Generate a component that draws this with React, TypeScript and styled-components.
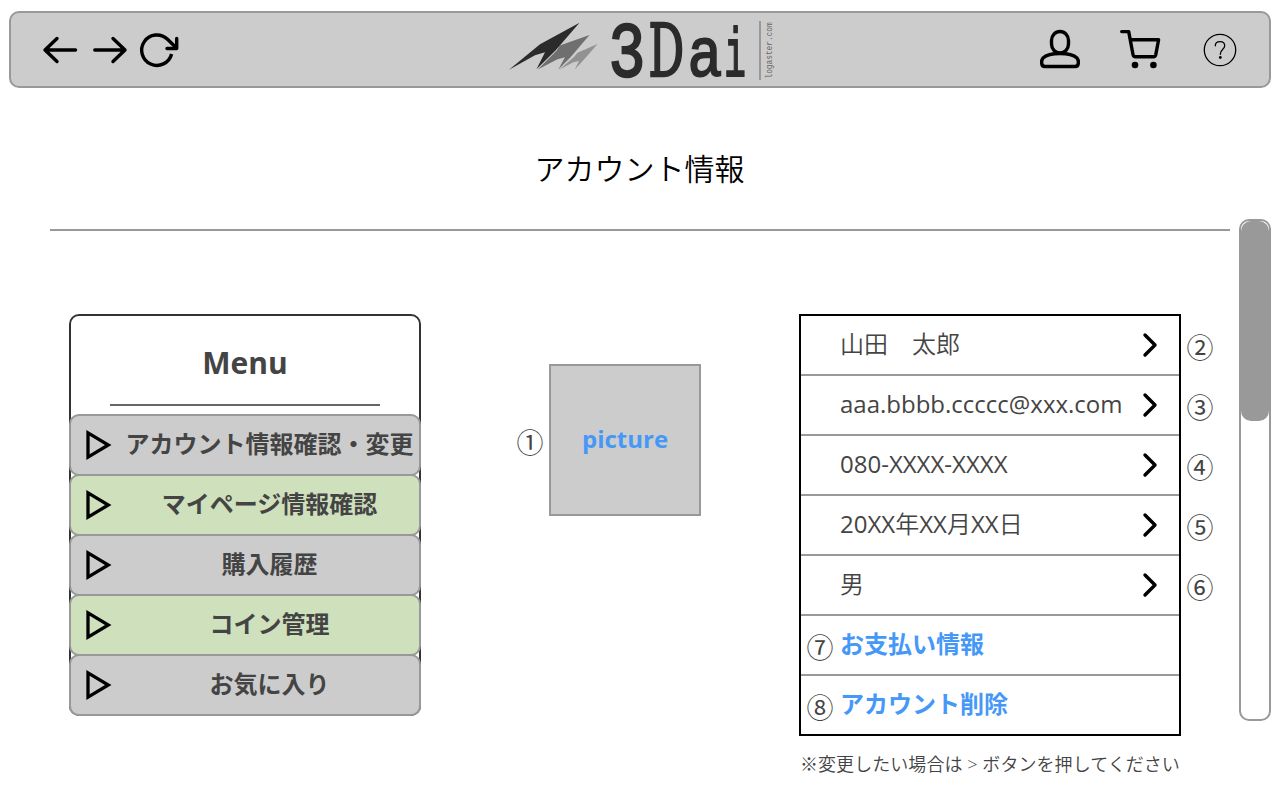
import React from "react";
import styled, { createGlobalStyle } from "styled-components";

const GlobalStyle = createGlobalStyle`
  *, *::before, *::after { box-sizing: border-box; }
  body {
    margin: 0;
    background: #fff;
    color: #444;
    font-family: "Open Sans", "Noto Sans CJK JP", sans-serif;
  }
`;

const lightStack = `"Open Sans", "Noto Sans CJK JP DemiLight", "Noto Sans CJK JP Light", "Noto Sans CJK JP", sans-serif`;

const Page = styled.div`
  width: 1280px;
  height: 800px;
  padding: 11px 9px 0;
  overflow: hidden;
`;

const Toolbar = styled.header`
  display: flex;
  align-items: center;
  height: 77px;
  padding: 0 29px;
  border: 2px solid #999;
  border-radius: 10px;
  background: #ccc;
`;

const IconGroup = styled.div<{ $gap: number }>`
  display: flex;
  flex: none;
  align-items: center;
  gap: ${(p) => p.$gap}px;
`;

const Icon = styled.svg`
  display: block;
  flex: none;
  overflow: visible;
  fill: none;
  stroke: #000;
  stroke-width: 3.4;
  stroke-linecap: round;
  stroke-linejoin: round;
`;

const LogoMark = styled.svg`
  display: block;
  flex: none;
  overflow: visible;
  margin: 0 auto 0 328px;
`;

const Title = styled.h1`
  margin: 0;
  height: 131px;
  padding: 61px 1px 0 0;
  color: #000;
  font-family: ${lightStack};
  font-size: 30px;
  font-weight: 350;
  line-height: 40px;
  text-align: center;
`;

const Body = styled.div`
  display: flex;
  gap: 9px;
  padding-left: 41px;
`;

const Content = styled.main`
  width: 1180px;
  padding-top: 10px;
`;

const Divider = styled.hr`
  height: 2px;
  margin: 0;
  border: 0;
  background: #999;
`;

const Columns = styled.div`
  display: flex;
  align-items: flex-start;
  padding: 83px 0 0 19px;
`;

const MenuPanel = styled.nav`
  display: flex;
  flex-direction: column;
  width: 352px;
  height: 402px;
  border-radius: 10px;
  box-shadow: inset 0 0 0 2px #333;
`;

const MenuTitle = styled.h2`
  height: 90px;
  margin: 0;
  padding-top: 29px;
  font-size: 30px;
  font-weight: 700;
  line-height: 40px;
  text-align: center;
`;

const MenuRule = styled.hr`
  width: 270px;
  height: 2px;
  margin: 0 auto 8px;
  border: 0;
  background: #666;
`;

const MenuItem = styled.a<{ $highlighted: boolean }>`
  display: flex;
  flex: none;
  align-items: center;
  height: 62px;
  margin-bottom: -2px;
  padding-left: 15px;
  border: 2px solid #999;
  border-radius: 10px;
  background: ${(p) => (p.$highlighted ? "#cfe0bc" : "#ccc")};
`;

const MenuLabel = styled.span`
  flex: 1;
  margin-left: 8px;
  font-size: 24px;
  font-weight: 700;
  line-height: 32px;
  text-align: center;
  white-space: nowrap;
  padding-bottom: 3px;
`;

const PictureGroup = styled.section`
  display: flex;
  align-items: center;
  margin: 50px 0 0 95px;
  gap: 5px;
`;

const Marker = styled.span<{ $drop?: number }>`
  display: block;
  flex: none;
  width: 28px;
  padding-top: ${(p) => p.$drop ?? 4}px;
  font-family: "Noto Sans CJK JP", sans-serif;
  font-size: 27px;
  font-weight: 400;
  line-height: 32px;
  text-align: center;
`;

const Picture = styled.div`
  display: flex;
  align-items: center;
  justify-content: center;
  width: 152px;
  height: 152px;
  padding-bottom: 2px;
  border: 2px solid #999;
  background: #ccc;
  color: #4598f7;
  font-size: 24px;
  font-weight: 700;
  line-height: 32px;
`;

const Details = styled.section`
  width: 382px;
  margin-left: 98px;
`;

const Table = styled.div`
  height: 422px;
  border: 2px solid #000;
`;

const Row = styled.div`
  display: flex;
  align-items: center;
  height: 60px;
  padding-right: 21px;
  border-bottom: 2px solid #999;

  &:last-child {
    height: 58px;
    border-bottom: 0;
  }
`;

const Gutter = styled.div`
  display: flex;
  flex: none;
  width: 39px;
  padding-left: 5px;
`;

const Value = styled.span<{ $link?: boolean }>`
  flex: 1;
  padding-bottom: ${(p) => (p.$link ? 3 : 2)}px;
  color: ${(p) => (p.$link ? "#4598f7" : "#444")};
  font-family: ${(p) => (p.$link ? "inherit" : lightStack)};
  font-size: 24px;
  font-weight: ${(p) => (p.$link ? 700 : 400)};
  line-height: 32px;
  white-space: pre;
`;

const Ideographs = styled.span`
  font-weight: 300;
`;

const Note = styled.p`
  margin: 16px 0 0 1px;
  font-family: ${lightStack};
  font-size: 18px;
  font-weight: 350;
  letter-spacing: 0.06px;
  line-height: 24px;
  white-space: nowrap;
`;

const MarkerColumn = styled.div`
  display: flex;
  flex-direction: column;
  gap: 28px;
  margin: 17px 0 0 5px;
`;

const Scrollbar = styled.div`
  flex: none;
  width: 32px;
  height: 502px;
  border: 2px solid #999;
  border-radius: 10px;
`;

const Thumb = styled.div`
  height: 200px;
  border-radius: 10px;
  background: #999;
`;

const Logo = () => (
  <LogoMark width="266" height="60" viewBox="508 20 266 60">
    <path fill="#2b2b2b" d="M509 69.8 540 44.2 579.5 22.8 555.5 50.5 536.5 69.3 545 52.3 535 55.3z" />
    <path fill="#6f6f6f" d="M537.8 69.4 556.8 50.5 559.8 45.5 589.5 35 570.5 57.3 558.3 69.4 565 57.3 557.5 59.3z" />
    <path fill="#929292" d="M559.5 69.4 574 57 577.5 52.8 597.5 44 586 57.3 574.8 69.4 579 61 573.3 62.3z" />
    <g fill="#2b2b2b" stroke="#2b2b2b" fontFamily="Liberation Mono" fontSize="82">
      <text strokeWidth="2.4" transform="translate(608.6 75.6) scale(.75 .95)">3</text>
      <text strokeWidth="2.4" transform="translate(648.6 76.2) scale(.6 .99)" fontFamily="DejaVu Serif" fontSize="74">
        D
      </text>
      <text strokeWidth="2.2" transform="translate(687.4 75.8) scale(.71 .86)">a</text>
      <text strokeWidth="2.2" transform="translate(724.2 76.2) scale(.44 .83)">i</text>
    </g>
    <path stroke="#999" strokeWidth="2" d="M760 21v59" />
    <text
      transform="translate(771.5 78.5) rotate(-90) scale(1 1.2)"
      fill="#666"
      fontFamily="Liberation Mono"
      fontSize="7.8"
    >
      logaster.com
    </text>
  </LogoMark>
);

const menuItems = [
  { label: "アカウント情報確認・変更", highlighted: false },
  { label: "マイページ情報確認", highlighted: true },
  { label: "購入履歴", highlighted: false },
  { label: "コイン管理", highlighted: true },
  { label: "お気に入り", highlighted: false },
];

const accountFields = ["山田　太郎", "aaa.bbbb.ccccc@xxx.com", "080-XXXX-XXXX", "20XX年XX月XX日", "男"];

const accountLinks = [
  { marker: "⑦", label: "お支払い情報" },
  { marker: "⑧", label: "アカウント削除" },
];

// Kanji runs are set lighter than the Latin text beside them.
const renderValue = (value: string) =>
  value
    .split(/([^\x00-\x7f]+)/)
    .filter(Boolean)
    .map((run, i) => (/[^\x00-\x7f]/.test(run) ? <Ideographs key={i}>{run}</Ideographs> : run));

export default function App() {
  return (
    <Page>
      <GlobalStyle />
      <Toolbar>
        <IconGroup $gap={10}>
          <Icon width="40" height="40" viewBox="40 30 40 40">
            <path d="M75.5 50H45M57 38.5 45 50 57 61.5" />
          </Icon>
          <Icon width="40" height="40" viewBox="90 30 40 40">
            <path d="M94.8 50H125M113 38.5 125 50 113 61.5" />
          </Icon>
          <Icon width="40" height="40" viewBox="140 30 40 40">
            <path strokeLinecap="butt" d="M171.6 54A15.2 15.2 0 1 1 167.5 39.3L177 48.5" />
            <path d="M176.7 38.5V48.5H167" />
          </Icon>
        </IconGroup>
        <Logo />
        <IconGroup $gap={40}>
          <Icon width="40" height="40" viewBox="1040 30 40 40">
            <path d="M1051.5 40.5a8.5 9 0 0 1 17 0v3.5a8.5 9 0 0 1-17 0z" />
            <path d="M1060 53.5c8 0 14 1.7 17 4.5 1.4 1.5 1.5 3.4 1.3 5.5-.2 2-1.2 3-3.3 3h-30c-2.1 0-3.1-1-3.3-3-.2-2.1-.1-4 1.3-5.5 3-2.8 9-4.5 17-4.5z" />
          </Icon>
          <Icon width="40" height="40" viewBox="1120 30 40 40">
            <path d="M1121.7 31.6H1128.7L1133 54.5Q1133.4 56.8 1135.5 56.8H1153.5Q1155.3 56.8 1155.7 55L1158.6 39.7H1130.5" />
            <circle cx="1135" cy="65" r="3.3" fill="#000" stroke="none" />
            <circle cx="1153.4" cy="65" r="3.3" fill="#000" stroke="none" />
          </Icon>
          <Icon width="40" height="40" viewBox="1200 30 40 40">
            <circle cx="1220" cy="50" r="15.7" strokeWidth="1.3" />
            <path
              strokeWidth="1.3"
              d="M1215.3 45.8C1215.3 40.3 1224.7 40.3 1224.7 45.8C1224.7 49.3 1220.3 49.5 1220.3 54.3"
            />
            <circle cx="1220.3" cy="57.5" r="1.4" fill="#000" stroke="none" />
          </Icon>
        </IconGroup>
      </Toolbar>

      <Title>アカウント情報</Title>

      <Body>
        <Content>
          <Divider />
          <Columns>
            <MenuPanel>
              <MenuTitle>Menu</MenuTitle>
              <MenuRule />
              {menuItems.map((item) => (
                <MenuItem key={item.label} $highlighted={item.highlighted}>
                  <Icon width="26" height="30" viewBox="0 0 26 30">
                    <path strokeLinejoin="miter" strokeWidth="3.3" d="M2 2.8V27.2L22.3 15z" />
                  </Icon>
                  <MenuLabel>{item.label}</MenuLabel>
                </MenuItem>
              ))}
            </MenuPanel>

            <PictureGroup>
              <Marker>①</Marker>
              <Picture>picture</Picture>
            </PictureGroup>

            <Details>
              <Table>
                {accountFields.map((value) => (
                  <Row key={value}>
                    <Gutter />
                    <Value>{renderValue(value)}</Value>
                    <Icon width="15" height="24" viewBox="0 0 15 24">
                      <path d="M2 2 12 12 2 22" />
                    </Icon>
                  </Row>
                ))}
                {accountLinks.map((link) => (
                  <Row key={link.label}>
                    <Gutter>
                      <Marker>{link.marker}</Marker>
                    </Gutter>
                    <Value $link>{link.label}</Value>
                  </Row>
                ))}
              </Table>
              <Note>※変更したい場合は &gt; ボタンを押してください</Note>
            </Details>

            <MarkerColumn>
              {["②", "③", "④", "⑤", "⑥"].map((marker) => (
                <Marker key={marker} $drop={0}>
                  {marker}
                </Marker>
              ))}
            </MarkerColumn>
          </Columns>
        </Content>
        <Scrollbar>
          <Thumb />
        </Scrollbar>
      </Body>
    </Page>
  );
}
